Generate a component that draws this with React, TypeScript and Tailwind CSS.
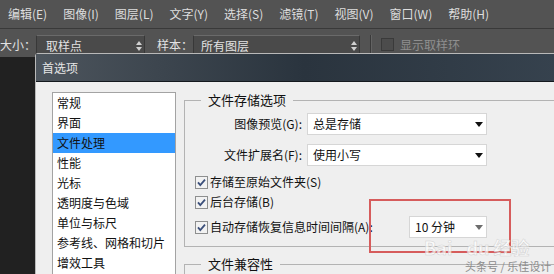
import React from 'react'

const menus = ['编辑(E)', '图像(I)', '图层(L)', '文字(Y)', '选择(S)', '滤镜(T)', '视图(V)', '窗口(W)', '帮助(H)']
const prefs = ['常规', '界面', '文件处理', '性能', '光标', '透明度与色域', '单位与标尺', '参考线、网格和切片', '增效工具']

function UpDown() {
  return (
    <svg width="6" height="10" viewBox="0 0 6 10">
      <path d="M0 4 L3 0 L6 4 Z" fill="#d0d0d0" />
      <path d="M0 6 L3 10 L6 6 Z" fill="#d0d0d0" />
    </svg>
  )
}

function Arrow({ color = '#111' }: { color?: string }) {
  return (
    <svg width="8" height="5" viewBox="0 0 8 5">
      <path d="M0 0 H8 L4 5 Z" fill={color} />
    </svg>
  )
}

function Check() {
  return (
    <svg width="13" height="13" viewBox="0 0 13 13" className="shrink-0">
      <rect x="0.5" y="0.5" width="12" height="12" fill="#f2f2f2" stroke="#8e8f8f" />
      <path d="M3 6.3 L5.3 9 L10 3.6" fill="none" stroke="#3b4f7a" strokeWidth="1.8" />
    </svg>
  )
}

function Select({ text, w, arrow }: { text: string; w: string; arrow?: string }) {
  return (
    <div className={`${w} h-[22px] bg-white border border-[#d6d6d6] flex items-center justify-between pl-[5px] pr-[3px]`}>
      <span>{text}</span>
      <Arrow color={arrow} />
    </div>
  )
}

function App() {
  return (
    <div className="relative w-[554px] h-[274px] overflow-hidden bg-[#212121] font-['Noto_Sans_CJK_SC',sans-serif]">
      {/* menu bar */}
      <div className="h-[29px] bg-[#535353] border-b border-[#393939] flex items-center pl-2 gap-4 text-[12px] text-[#dedede]">
        {menus.map(m => (
          <span key={m}>{m}</span>
        ))}
      </div>

      {/* options bar */}
      <div className="h-[28px] bg-[#535353] flex items-start pt-[6px] text-[12px] text-[#e2e2e2]">
        <span className="leading-[20px]">大小：</span>
        <div className="w-[109px] h-[21px] bg-[#4a4a4a] border border-[#383838] border-t-[#6a6a6a] flex items-center justify-between pl-[9px] pr-[2px]">
          <span>取样点</span>
          <UpDown />
        </div>
        <span className="ml-[12px] leading-[20px]">样本：</span>
        <div className="w-[167px] h-[21px] bg-[#4a4a4a] border border-[#383838] border-t-[#6a6a6a] flex items-center justify-between pl-[7px] pr-[2px]">
          <span>所有图层</span>
          <UpDown />
        </div>
        <div className="ml-[10px] w-[2px] h-[24px] border-l border-[#3a3a3a] border-r border-r-[#636363]" />
        <div className="ml-[9px] mt-[3px] w-[13px] h-[13px] bg-[#4c4c4c] border border-[#3a3a3a]" />
        <span className="ml-[6px] leading-[20px] text-[#8f8f8f]">显示取样环</span>
      </div>

      {/* preferences window */}
      <div className="absolute left-[35px] top-[53px] w-[540px] h-[240px] border border-[#b9b9b9] rounded-t-[3px] bg-[#efefef] flex flex-col text-[12px] text-[#111]">
        <div className="h-[28px] shrink-0 bg-linear-to-r from-[#4d555d] via-[#2a343e] to-[#37434f] border-b border-[#14191e] flex items-center pl-[6px] text-[#e6e6e6]">
          首选项
        </div>
        <div className="flex pl-[16px] pt-[10px]">
          <div className="w-[124px] h-[200px] shrink-0 bg-white border border-[#a3a3a3]">
            {prefs.map(p => (
              <div
                key={p}
                className={`h-[20px] flex items-center pl-[4px] ${p === '文件处理' ? 'bg-[#3399ff]' : ''}`}
              >
                {p}
              </div>
            ))}
          </div>

          <div className="ml-[8px] flex flex-col">
            <fieldset className="w-[420px] border border-[#b3b3b3] pb-[8px]">
              <legend className="ml-[16px] px-[7px] text-[13px] leading-[16px]">文件存储选项</legend>
              <div className="mt-[5px] flex items-center">
                <span className="w-[117px] text-right">图像预览(G):</span>
                <div className="ml-[5px]">
                  <Select text="总是存储" w="w-[180px]" />
                </div>
              </div>
              <div className="mt-[9px] flex items-center">
                <span className="w-[117px] text-right">文件扩展名(F):</span>
                <div className="ml-[5px]">
                  <Select text="使用小写" w="w-[180px]" />
                </div>
              </div>
              <div className="mt-[6px] h-[20px] pl-[10px] flex items-center gap-[2px]">
                <Check />
                <span>存储至原始文件夹(S)</span>
              </div>
              <div className="h-[20px] pl-[10px] flex items-center gap-[2px]">
                <Check />
                <span>后台存储(B)</span>
              </div>
              <div className="mt-[4px] pl-[10px] flex items-center">
                <div className="w-[214px] flex items-center gap-[2px]">
                  <Check />
                  <span>自动存储恢复信息时间间隔(A):</span>
                </div>
                <Select text="10 分钟" w="w-[78px]" arrow="#6d6d6d" />
              </div>
            </fieldset>

            <fieldset className="mt-[9px] w-[420px] h-[40px] border border-[#b3b3b3]">
              <legend className="ml-[16px] px-[7px] text-[13px] leading-[16px]">文件兼容性</legend>
            </fieldset>
          </div>
        </div>
      </div>

      {/* annotation + watermarks */}
      <div className="absolute left-[369px] top-[199px] w-[142px] h-[54px] border-2 border-[#d65c5c]" />
      <div className="absolute left-[424px] top-[238px] text-[18px] font-bold leading-[18px] text-white/70 [-webkit-text-stroke:0.5px_#d2d2d2]">
        Bai<span className="ml-[14px]">du</span>
        <span className="ml-[4px]">经验</span>
      </div>
      <div className="absolute left-[465px] top-[258px] text-[11px] leading-[16px] text-[#8c8c8c]">头条号 / 乐佳设计</div>
    </div>
  )
}

export default App
